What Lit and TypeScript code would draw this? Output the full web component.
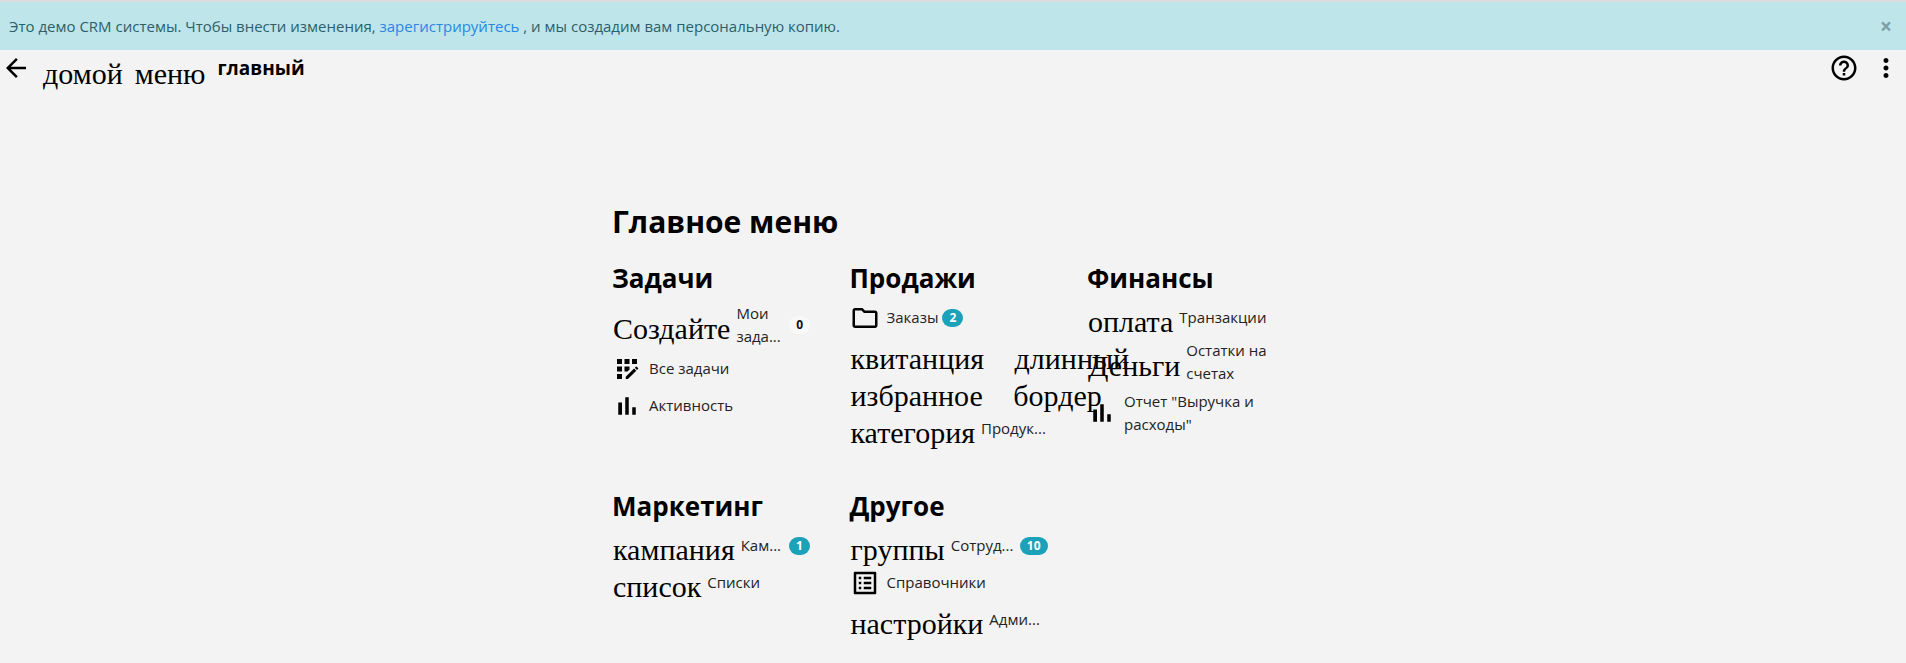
import { LitElement, html, css, svg, nothing } from 'lit'
import { customElement } from 'lit/decorators.js'

const ICONS = {
  back: svg`<path d="M20 11H7.83l5.59-5.59L12 4l-8 8 8 8 1.41-1.41L7.83 13H20v-2z"/>`,
  help: svg`<path d="M11 18h2v-2h-2v2zm1-16C6.48 2 2 6.48 2 12s4.48 10 10 10 10-4.48 10-10S17.52 2 12 2zm0 18c-4.41 0-8-3.59-8-8s3.59-8 8-8 8 3.59 8 8-3.59 8-8 8zm0-14c-2.21 0-4 1.79-4 4h2c0-1.1.9-2 2-2s2 .9 2 2c0 2-3 1.75-3 5h2c0-2.25 3-2.5 3-5 0-2.21-1.79-4-4-4z"/>`,
  more: svg`<path d="M12 8c1.1 0 2-.9 2-2s-.9-2-2-2-2 .9-2 2 .9 2 2 2zm0 2c-1.1 0-2 .9-2 2s.9 2 2 2 2-.9 2-2-.9-2-2-2zm0 6c-1.1 0-2 .9-2 2s.9 2 2 2 2-.9 2-2-.9-2-2-2z"/>`,
  registration: svg`<rect x="10" y="4" width="4" height="4"/><rect x="4" y="16" width="4" height="4"/><rect x="4" y="10" width="4" height="4"/><rect x="4" y="4" width="4" height="4"/><polygon points="14,12.42 14,10 10,10 10,14 12.42,14"/><path d="M20.88,11.29l-1.17-1.17c-0.16-0.16-0.42-0.16-0.58,0L18.25,11L20,12.75l0.88-0.88C21.04,11.71,21.04,11.45,20.88,11.29z"/><polygon points="11,18.25 11,20 12.75,20 19.42,13.33 17.67,11.58"/><polygon points="16,4 16,8 20,8 20,4"/>`,
  bars: svg`<path d="M5 9.2h3V19H5zM10.6 5h2.8v14h-2.8zm5.6 8H19v6h-2.8z"/>`,
  folder: svg`<path d="M20 6h-8l-2-2H4c-1.1 0-1.99.9-1.99 2L2 18c0 1.1.9 2 2 2h16c1.1 0 2-.9 2-2V8c0-1.1-.9-2-2-2zm0 12H4V6h5.17l2 2H20v10z"/>`,
  list: svg`<path d="M19 5v14H5V5h14m1.1-2H3.9c-.5 0-.9.4-.9.9v16.2c0 .4.4.9.9.9h16.2c.4 0 .9-.5.9-.9V3.9c0-.5-.5-.9-.9-.9zM11 7h6v2h-6V7zm0 4h6v2h-6v-2zm0 4h6v2h-6zM7 7h2v2H7zm0 4h2v2H7zm0 4h2v2H7z"/>`,
}

type IconName = keyof typeof ICONS

interface MenuItem {
  // untranslated icon name that shows up as text, or a real svg icon
  glyph?: string
  icon?: IconName
  label?: string
  badge?: string
  badgeClass?: string
}

const GROUPS: { title: string; items: MenuItem[] }[] = [
  {
    title: 'Задачи',
    items: [
      { glyph: 'Создайте', label: 'Мои зада...', badge: '0', badgeClass: 'plain' },
      { icon: 'registration', label: 'Все задачи' },
      { icon: 'bars', label: 'Активность' },
    ],
  },
  {
    title: 'Продажи',
    items: [
      { icon: 'folder', label: 'Заказы', badge: '2', badgeClass: 'near' },
      { glyph: 'квитанция длинный' },
      { glyph: 'избранное бордер' },
      { glyph: 'категория', label: 'Продук...' },
    ],
  },
  {
    title: 'Финансы',
    items: [
      { glyph: 'оплата', label: 'Транзакции' },
      { glyph: 'Деньги', label: 'Остатки на счетах' },
      { icon: 'bars', label: 'Отчет "Выручка и расходы"' },
    ],
  },
  {
    title: 'Маркетинг',
    items: [
      { glyph: 'кампания', label: 'Кам...', badge: '1' },
      { glyph: 'список', label: 'Списки' },
    ],
  },
  {
    title: 'Другое',
    items: [
      { glyph: 'группы', label: 'Сотруд...', badge: '10' },
      { icon: 'list', label: 'Справочники' },
      { glyph: 'настройки', label: 'Адми...' },
    ],
  },
]

@customElement('app-root')
export class AppRoot extends LitElement {
  static styles = css`
    :host {
      display: block;
      min-height: 100vh;
      background: #f4f3f4;
      color: #000;
      font-family: 'Open Sans', sans-serif;
      border-top: 2px solid #dcdcdc;
      box-sizing: border-box;
    }

    .banner {
      display: flex;
      align-items: center;
      justify-content: space-between;
      height: 48px;
      padding: 0 14px 0 9px;
      background: #bde5ea;
      color: #2c5f6b;
      font-size: 15px;
    }

    .banner a {
      color: #2b86e4;
      text-decoration: none;
    }

    .close {
      color: #7d9ea6;
      font-size: 21px;
      font-weight: 700;
      line-height: 1;
    }

    .topbar {
      display: flex;
      align-items: flex-start;
      height: 36px;
      padding: 3px 5px 0 1px;
      gap: 12px;
    }

    .topbar .title {
      font-size: 19px;
      font-weight: 700;
      line-height: 30px;
    }

    .spacer {
      flex: 1;
    }

    .glyph-text {
      font-family: 'Liberation Serif', serif;
      font-size: 30px;
      white-space: nowrap;
    }

    .topbar .glyph-text {
      line-height: 41px;
      height: 30px;
    }

    svg {
      display: block;
      width: 30px;
      height: 30px;
      flex: none;
      fill: #000;
    }

    main {
      padding: 112px 0 0 612px;
    }

    h1 {
      margin: 0 0 19px;
      font-size: 30px;
      font-weight: 700;
      line-height: 41px;
    }

    .groups {
      display: grid;
      grid-template-columns: repeat(3, 198px);
      column-gap: 39.5px;
      row-gap: 42px;
    }

    .group {
      min-width: 0;
    }

    h2 {
      margin: 0 0 4px;
      font-size: 26px;
      font-weight: 700;
      line-height: 34px;
    }

    .item {
      display: flex;
      align-items: center;
      min-height: 37px;
      padding: 3px 0;
      box-sizing: border-box;
    }

    .item .glyph-text {
      height: 30px;
      line-height: 37px;
      padding-left: 1px;
      margin-right: -1px;
      word-spacing: 23px;
    }

    .label {
      margin-left: 7px;
      min-width: 0;
      font-size: 15px;
      line-height: 22.5px;
      color: #222;
    }

    .badge {
      flex: none;
      margin-left: 8px;
      padding: 0 7px;
      height: 18px;
      border-radius: 9px;
      background: #1ba1b8;
      color: #fff;
      font-size: 12px;
      font-weight: 700;
      line-height: 18px;
    }

    .badge.near {
      margin-left: 4px;
    }

    .badge.plain {
      background: #f8f8f9;
      color: #111;
    }
  `

  private renderIcon(name: IconName) {
    return html`<svg viewBox="0 0 24 24">${ICONS[name]}</svg>`
  }

  private renderItem(item: MenuItem) {
    return html`
      <div class="item">
        ${item.icon
          ? this.renderIcon(item.icon)
          : html`<span class="glyph-text">${item.glyph}</span>`}
        ${item.label ? html`<span class="label">${item.label}</span>` : nothing}
        ${item.badge
          ? html`<span class="badge ${item.badgeClass ?? ''}">${item.badge}</span>`
          : nothing}
      </div>
    `
  }

  render() {
    return html`
      <div class="banner">
        <span>
          Это демо CRM системы. Чтобы внести изменения,
          <a href="#">зарегистрируйтесь</a> , и мы создадим вам персональную копию.
        </span>
        <span class="close">×</span>
      </div>

      <div class="topbar">
        ${this.renderIcon('back')}
        <span class="glyph-text">домой</span>
        <span class="glyph-text">меню</span>
        <span class="title">главный</span>
        <span class="spacer"></span>
        ${this.renderIcon('help')} ${this.renderIcon('more')}
      </div>

      <main>
        <h1>Главное меню</h1>
        <div class="groups">
          ${GROUPS.map(
            (group) => html`
              <section class="group">
                <h2>${group.title}</h2>
                ${group.items.map((item) => this.renderItem(item))}
              </section>
            `
          )}
        </div>
      </main>
    `
  }
}
